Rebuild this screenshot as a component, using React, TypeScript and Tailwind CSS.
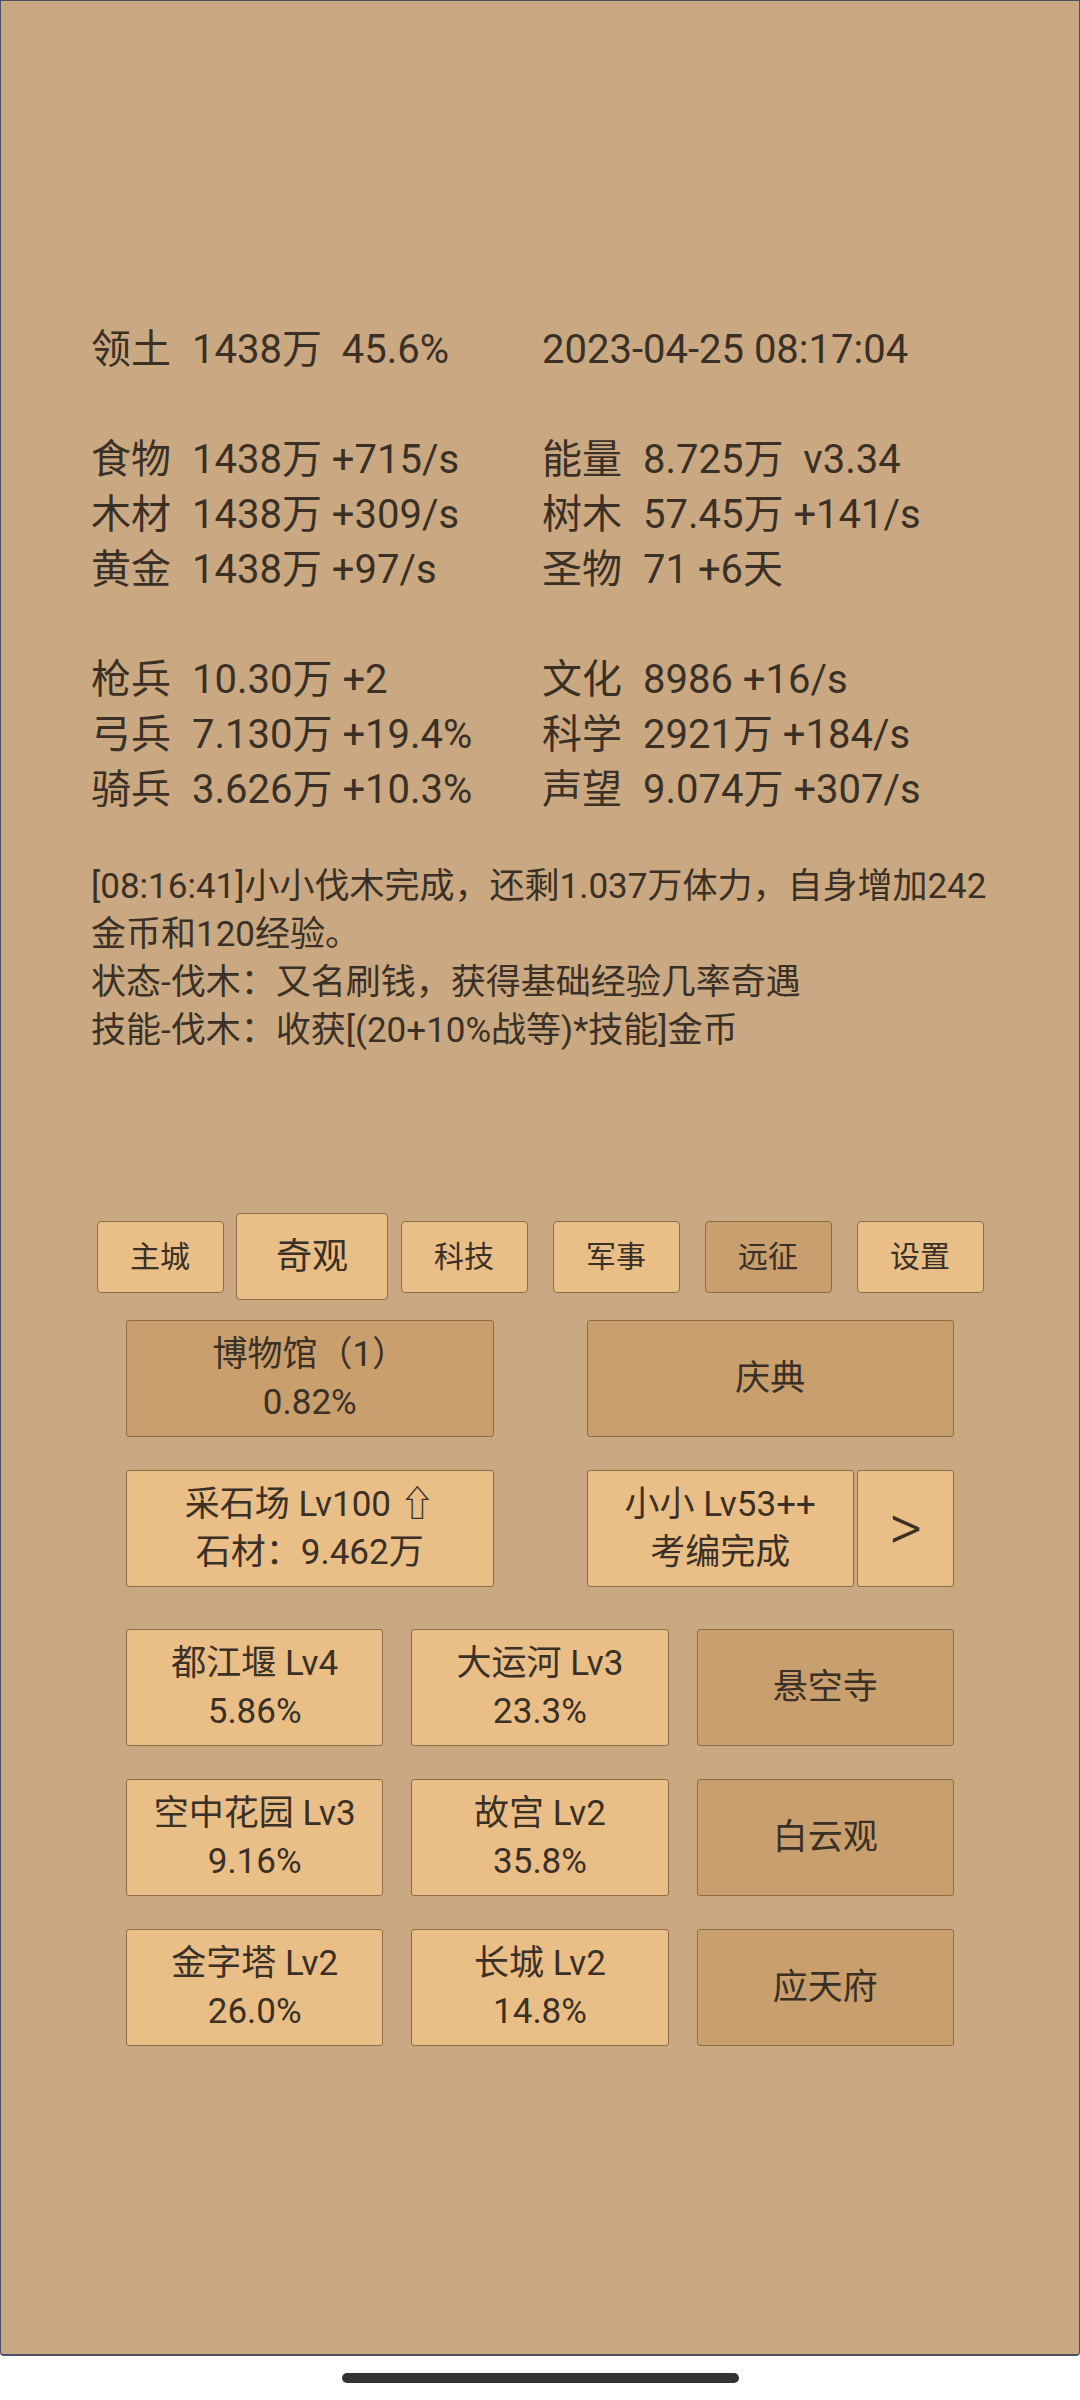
import React from 'react';
import clsx from 'clsx';

type Cell = [string | null, string];

const statRows: Array<[Cell, Cell] | null> = [
  [['领土', '1438万  45.6%'], [null, '2023-04-25 08:17:04']],
  null,
  [['食物', '1438万 +715/s'], ['能量', '8.725万  v3.34']],
  [['木材', '1438万 +309/s'], ['树木', '57.45万 +141/s']],
  [['黄金', '1438万 +97/s'], ['圣物', '71 +6天']],
  null,
  [['枪兵', '10.30万 +2'], ['文化', '8986 +16/s']],
  [['弓兵', '7.130万 +19.4%'], ['科学', '2921万 +184/s']],
  [['骑兵', '3.626万 +10.3%'], ['声望', '9.074万 +307/s']],
];

const logLines = [
  '[08:16:41]小小伐木完成，还剩1.037万体力，自身增加242',
  '金币和120经验。',
  '状态-伐木：又名刷钱，获得基础经验几率奇遇',
  '技能-伐木：收获[(20+10%战等)*技能]金币',
];

const tabs = [
  { name: '主城' },
  { name: '奇观', active: true },
  { name: '科技' },
  { name: '军事' },
  { name: '远征', dark: true },
  { name: '设置' },
];

const wonders = [
  { lines: ['都江堰 Lv4', '5.86%'] },
  { lines: ['大运河 Lv3', '23.3%'] },
  { lines: ['悬空寺'], dark: true },
  { lines: ['空中花园 Lv3', '9.16%'] },
  { lines: ['故宫 Lv2', '35.8%'] },
  { lines: ['白云观'], dark: true },
  { lines: ['金字塔 Lv2', '26.0%'] },
  { lines: ['长城 Lv2', '14.8%'] },
  { lines: ['应天府'], dark: true },
];

function StatCell({ cell }: { cell: Cell }) {
  const [label, value] = cell;
  return (
    <div className="flex">
      {label && <span className="w-[101px] shrink-0">{label}</span>}
      <span className="whitespace-pre">{value}</span>
    </div>
  );
}

function Box({ lines, dark, className }: { lines: React.ReactNode[]; dark?: boolean; className?: string }) {
  return (
    <div
      className={clsx(
        'flex flex-col items-center justify-center h-[117px] rounded-[3px] border border-[#8c6c47] text-[35px] leading-[48px]',
        dark ? 'bg-[#c99f6e]' : 'bg-[#eabf87]',
        className
      )}
    >
      {lines.map((l, i) => (
        <div key={i} className="whitespace-pre">{l}</div>
      ))}
    </div>
  );
}

export default function App() {
  return (
    <div
      className="w-[1080px] h-[2400px] bg-white flex flex-col text-[#3a3026]"
      style={{ fontFamily: 'Roboto, "Noto Sans CJK SC", "DejaVu Sans", sans-serif' }}
    >
      <div className="h-[2356px] shrink-0 bg-[#caa982] border border-b-2 border-[#4c5266] rounded-b-[4px] flex flex-col">
        {/* resource stats */}
        <div className="pt-[321px] pl-[90px] text-[40px] leading-[55px]">
          {statRows.map((row, i) =>
            row ? (
              <div key={i} className="grid grid-cols-[451px_1fr]">
                <StatCell cell={row[0]} />
                <StatCell cell={row[1]} />
              </div>
            ) : (
              <div key={i} className="h-[55px]" />
            )
          )}
        </div>

        {/* log */}
        <div className="mt-[46px] pl-[90px] text-[35px] leading-[48px]">
          {logLines.map((l, i) => (
            <div key={i}>{l}</div>
          ))}
        </div>

        {/* tabs */}
        <div className="mt-[158px] mx-auto w-[912px] h-[87px] flex items-center">
          {tabs.map((t) => (
            <div key={t.name} className="flex-1 flex justify-center">
              <div
                className={clsx(
                  'flex items-center justify-center rounded-[4px] border border-[#8c6c47]',
                  t.active ? 'w-[152px] h-[87px] text-[36px]' : 'w-[127px] h-[72px] text-[30px]',
                  t.dark ? 'bg-[#c99f6e]' : 'bg-[#eabf87]'
                )}
              >
                {t.name}
              </div>
            </div>
          ))}
        </div>

        {/* museum / celebration */}
        <div className="mt-[20px] mx-auto w-[828px] grid grid-cols-2 gap-x-[93px]">
          <Box lines={['博物馆（1）', '0.82%']} dark />
          <Box lines={['庆典']} dark />
        </div>

        {/* quarry / worker */}
        <div className="mt-[33px] mx-auto w-[828px] grid grid-cols-2 gap-x-[93px]">
          <Box lines={['采石场 Lv100 ⇧', '石材：9.462万']} />
          <div className="flex gap-[3px]">
            <Box lines={['小小 Lv53++', '考编完成']} className="flex-1" />
            <Box lines={['>']} className="w-[97px] text-[64px] leading-[70px] font-light" />
          </div>
        </div>

        {/* wonders */}
        <div className="mt-[42px] mx-auto w-[828px] grid grid-cols-3 gap-x-[28px] gap-y-[33px]">
          {wonders.map((w, i) => (
            <Box key={i} lines={w.lines} dark={w.dark} />
          ))}
        </div>
      </div>

      {/* home indicator */}
      <div className="mt-[17px] mx-auto w-[397px] h-[10px] rounded-full bg-[#333333]" />
    </div>
  );
}
